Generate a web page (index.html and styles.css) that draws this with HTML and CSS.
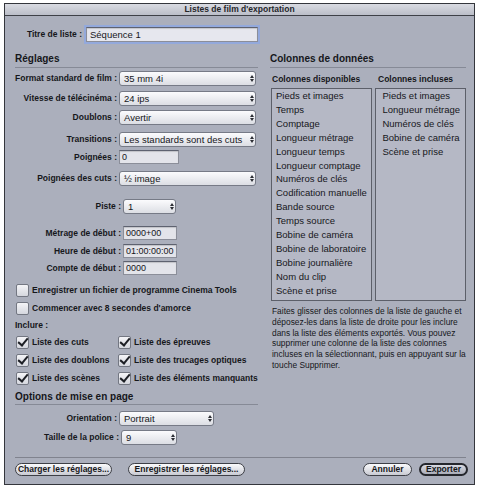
FILE: index.html
```html
<!DOCTYPE html>
<html lang="fr">
<head>
  <meta charset="UTF-8">
  <meta name="viewport" content="width=device-width, initial-scale=1.0">
  <title>Listes de film d'exportation</title>
  <link rel="stylesheet" href="styles.css">
</head>
<body>
  <div class="window">
    <div class="titlebar">Listes de film d'exportation</div>
    <div class="content">
      <div class="title-row">
        <span class="title-label">Titre de liste :</span>
        <div class="field title-field">Séquence 1</div>
      </div>

      <div class="columns">
        <div class="left">
          <div class="section-head">Réglages</div>

          <div class="row m-2"><span class="lbl">Format standard de film :</span><div class="select w137">35 mm 4i<span class="arrows"></span></div></div>
          <div class="row m-4"><span class="lbl">Vitesse de télécinéma :</span><div class="select w137">24 ips<span class="arrows"></span></div></div>
          <div class="row m-3"><span class="lbl">Doublons :</span><div class="select w137">Avertir<span class="arrows"></span></div></div>
          <div class="row m-6"><span class="lbl">Transitions :</span><div class="select w137">Les standards sont des cuts<span class="arrows"></span></div></div>
          <div class="row m-2"><span class="lbl">Poignées :</span><div class="field w60">0</div></div>
          <div class="row m-5"><span class="lbl">Poignées des cuts :</span><div class="select w137">½ image<span class="arrows"></span></div></div>

          <div class="row m-12"><span class="lbl wide">Piste :</span><div class="select w53">1<span class="arrows"></span></div></div>
          <div class="row m-11"><span class="lbl wide">Métrage de début :</span><div class="field w54">0000+00</div></div>
          <div class="row m-2"><span class="lbl wide">Heure de début :</span><div class="field w54">01:00:00:00</div></div>
          <div class="row m-1"><span class="lbl wide">Compte de début :</span><div class="field w54">0000</div></div>

          <div class="check-row m-6"><span class="box"></span>Enregistrer un fichier de programme Cinema Tools</div>
          <div class="check-row m-2"><span class="box"></span>Commencer avec 8 secondes d'amorce</div>
          <div class="include m-1">Inclure :</div>

          <div class="check-grid">
            <div class="check-row"><span class="box checked"></span>Liste des cuts</div>
            <div class="check-row"><span class="box checked"></span>Liste des épreuves</div>
            <div class="check-row"><span class="box checked"></span>Liste des doublons</div>
            <div class="check-row"><span class="box checked"></span>Liste des trucages optiques</div>
            <div class="check-row"><span class="box checked"></span>Liste des scènes</div>
            <div class="check-row"><span class="box checked"></span>Liste des éléments manquants</div>
          </div>

          <div class="section-head page-head">Options de mise en page</div>
          <div class="row m-5"><span class="lbl">Orientation :</span><div class="select w95">Portrait<span class="arrows"></span></div></div>
          <div class="row m-3"><span class="lbl mid">Taille de la police :</span><div class="select w56">9<span class="arrows"></span></div></div>
        </div>

        <div class="right">
          <div class="section-head">Colonnes de données</div>
          <div class="list-heads">
            <span class="list-head avail">Colonnes disponibles</span>
            <span class="list-head">Colonnes incluses</span>
          </div>
          <div class="lists">
            <ul class="list avail-list">
              <li>Pieds et images</li>
              <li>Temps</li>
              <li>Comptage</li>
              <li>Longueur métrage</li>
              <li>Longueur temps</li>
              <li>Longueur comptage</li>
              <li>Numéros de clés</li>
              <li>Codification manuelle</li>
              <li>Bande source</li>
              <li>Temps source</li>
              <li>Bobine de caméra</li>
              <li>Bobine de laboratoire</li>
              <li>Bobine journalière</li>
              <li>Nom du clip</li>
              <li>Scène et prise</li>
            </ul>
            <ul class="list incl-list">
              <li>Pieds et images</li>
              <li>Longueur métrage</li>
              <li>Numéros de clés</li>
              <li>Bobine de caméra</li>
              <li>Scène et prise</li>
            </ul>
          </div>
          <p class="help">Faites glisser des colonnes de la liste de gauche et déposez-les dans la liste de droite pour les inclure dans la liste des éléments exportés. Vous pouvez supprimer une colonne de la liste des colonnes incluses en la sélectionnant, puis en appuyant sur la touche Supprimer.</p>
        </div>
      </div>

      <div class="footer">
        <div class="btn-group">
          <span class="btn load">Charger les réglages...</span>
          <span class="btn save">Enregistrer les réglages...</span>
        </div>
        <div class="btn-group right-group">
          <span class="btn cancel">Annuler</span>
          <span class="btn default">Exporter</span>
        </div>
      </div>
    </div>
  </div>
</body>
</html>
```

FILE: styles.css
```css
body {
  margin: 0;
  background: #fff;
  font-family: "Liberation Sans", Arial, sans-serif;
  color: #16171b;
}

.window {
  margin: 3px 0 0 4px;
  width: 469px;
  height: 480px;
  border: 1px solid #34363c;
  background: #abafbc;
  box-sizing: content-box;
}

.titlebar {
  height: 11px;
  line-height: 11px;
  border-bottom: 1px solid #3e4047;
  background: linear-gradient(#d9dbe2, #bbbec8);
  text-align: center;
  font-size: 8.5px;
  font-weight: bold;
  color: #25262b;
}

.content {
  padding: 10px 7px 0 10px;
}

.title-row {
  display: flex;
  align-items: center;
  height: 16px;
}

.title-label {
  width: 67px;
  text-align: right;
  margin-right: 4px;
  font-size: 8.5px;
  font-weight: bold;
}

.field {
  height: 14px;
  line-height: 13px;
  box-sizing: border-box;
  padding-left: 2px;
  background: #e3e4ea;
  border: 1px solid #8b8e99;
  border-top-color: #5e6270;
  box-shadow: inset 0 1px 1px rgba(0, 0, 0, 0.15);
  font-size: 9px;
  white-space: nowrap;
  overflow: hidden;
}

.title-field {
  width: 172px;
  height: 15px;
  padding-left: 3px;
  font-size: 9.5px;
  background: #e6e7ee;
  box-shadow: 0 0 0 2px #93a9dc, inset 0 1px 1px rgba(0, 0, 0, 0.15);
}

.columns {
  display: flex;
  margin-top: 10px;
}

.left {
  width: 243px;
}

.right {
  width: 196px;
  margin-left: 12px;
}

.section-head {
  height: 14px;
  line-height: 14px;
  border-bottom: 1px solid #868a96;
  font-size: 10px;
  font-weight: bold;
  padding-bottom: 1px;
}

.page-head {
  margin-top: 4px;
  padding-bottom: 0;
}

.row {
  display: flex;
  align-items: center;
  height: 16px;
}

.lbl {
  width: 102px;
  margin-right: 2px;
  text-align: right;
  font-size: 8.5px;
  font-weight: bold;
  white-space: nowrap;
}

.lbl.wide {
  width: 106px;
}

.lbl.mid {
  width: 104px;
}

.select {
  position: relative;
  height: 15px;
  line-height: 13px;
  box-sizing: border-box;
  padding-left: 4px;
  border: 1px solid #767a86;
  border-radius: 3px;
  background: linear-gradient(#fbfbfd, #dcdee4);
  font-size: 9.5px;
  white-space: nowrap;
}

.arrows {
  position: absolute;
  right: 3px;
  top: 3px;
  width: 0;
  height: 7px;
}

.arrows::before,
.arrows::after {
  content: "";
  position: absolute;
  left: -2px;
  border-left: 2px solid transparent;
  border-right: 2px solid transparent;
}

.arrows::before {
  top: 0;
  border-bottom: 3px solid #2b2d33;
}

.arrows::after {
  bottom: 0;
  border-top: 3px solid #2b2d33;
}

.w137 { width: 137px; }
.w60 { width: 60px; }
.w53 { width: 53px; }
.w54 { width: 54px; }
.w95 { width: 95px; }
.w56 { width: 56px; }

.m-1 { margin-top: 1px; }
.m-2 { margin-top: 2px; }
.m-3 { margin-top: 3px; }
.m-4 { margin-top: 4px; }
.m-5 { margin-top: 5px; }
.m-6 { margin-top: 6px; }
.m-11 { margin-top: 11px; }
.m-12 { margin-top: 12px; }

.check-row {
  display: flex;
  align-items: center;
  height: 16px;
  font-size: 8.5px;
  font-weight: bold;
  white-space: nowrap;
}

.box {
  width: 11px;
  height: 11px;
  margin: 0 3px 0 1px;
  border: 1px solid #737782;
  border-radius: 2px;
  background: linear-gradient(#f4f4f7, #d5d7de);
  position: relative;
  flex: none;
}

.box.checked::after {
  content: "";
  position: absolute;
  left: 3px;
  top: -1px;
  width: 4px;
  height: 8px;
  border-right: 2px solid #1d1f25;
  border-bottom: 2px solid #1d1f25;
  transform: rotate(40deg);
}

.include {
  height: 16px;
  line-height: 16px;
  font-size: 8.5px;
  font-weight: bold;
}

.check-grid {
  display: grid;
  grid-template-columns: 102px auto;
  row-gap: 2px;
  margin-top: 1px;
}

.list-heads {
  display: flex;
  height: 14px;
  line-height: 14px;
  margin-top: 4px;
  font-size: 8.5px;
  font-weight: bold;
}

.list-head.avail {
  width: 106px;
  padding-left: 2px;
}

.lists {
  display: flex;
  margin-top: 2px;
  padding-left: 1px;
}

.list {
  list-style: none;
  margin: 0;
  padding: 0 0 0 4px;
  height: 213px;
  box-sizing: border-box;
  border: 1px solid #5c5f69;
  background: #b5b8c5;
  font-size: 9.5px;
  line-height: 13.9px;
}

.avail-list {
  width: 102px;
}

.incl-list {
  width: 91px;
  margin-left: 3px;
  padding-left: 6px;
}

.help {
  margin: 5px 0 0 2px;
  font-size: 8.4px;
  line-height: 10.8px;
}

.footer {
  display: flex;
  justify-content: space-between;
  margin-top: 12px;
  padding-top: 5px;
  border-top: 1px solid #80838e;
  width: 451px;
}

.btn-group {
  display: flex;
  gap: 16px;
}

.right-group {
  gap: 7px;
  margin-right: -2px;
}

.btn {
  height: 13px;
  line-height: 11px;
  box-sizing: border-box;
  border: 1px solid #3d3f46;
  border-radius: 7px;
  background: linear-gradient(#fafafc, #c9cbd3);
  text-align: center;
  font-size: 8.5px;
  font-weight: bold;
  white-space: nowrap;
}

.load { width: 97px; }
.save { width: 117px; }
.cancel { width: 49px; }

.default {
  width: 49px;
  border: 2px solid #25272d;
  line-height: 9px;
  background: linear-gradient(#d8dae2, #a9acb8);
}
```
